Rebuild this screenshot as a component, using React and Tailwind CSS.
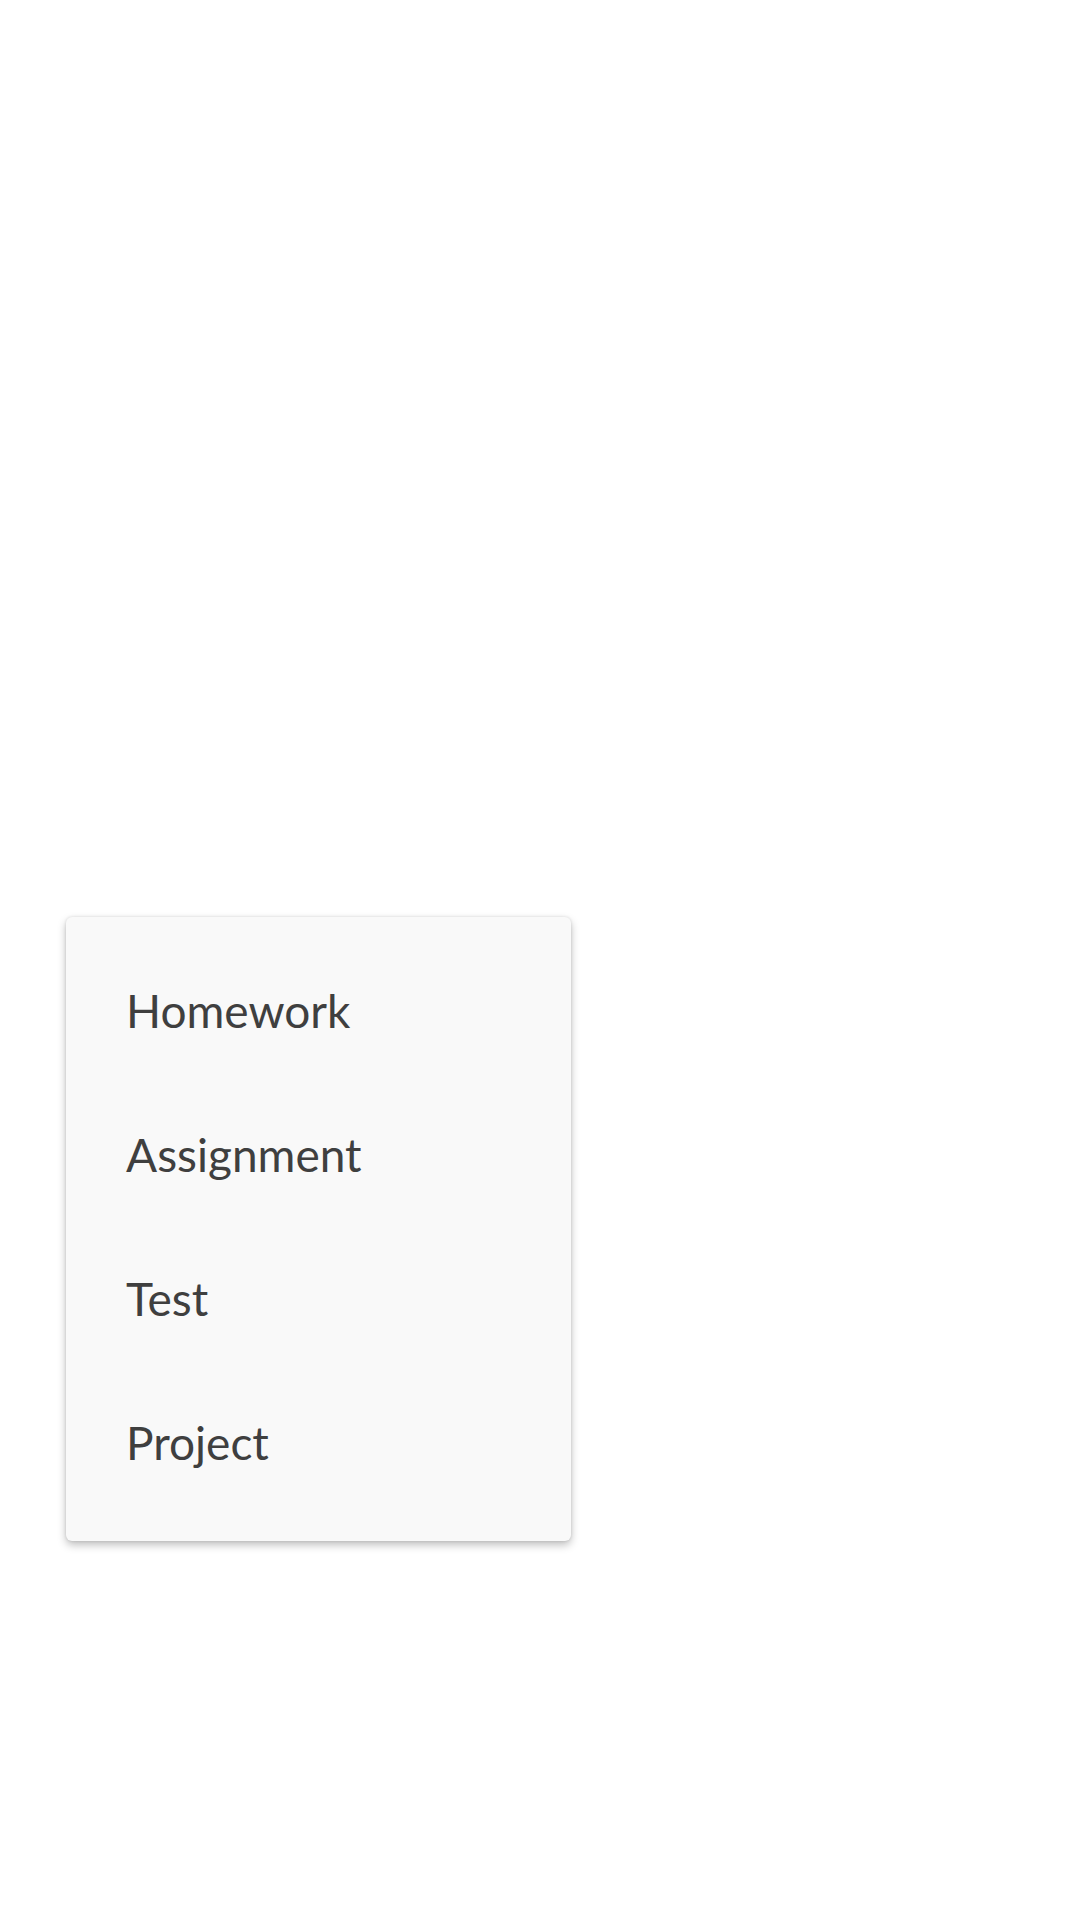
import React from 'react';

const options = ['Homework', 'Assignment', 'Test', 'Project'];

function App() {
    // popup menu for picking the task type
    return (
    <div className="w-[1080px] h-[1920px] bg-white pt-[917px] pl-[66px]">
        <div className="w-[505px] py-[24px] bg-[#f9f9f9] rounded-[6px] shadow-[0_4px_8px_rgba(0,0,0,0.25),0_0_3px_rgba(0,0,0,0.12)]">
            {options.map((option) => (
                <div
                key={option}
                className="h-[144px] pl-[60px] pb-[5px] flex items-center text-[46px] leading-[46px] text-[#3f3f3f] font-['Lato',sans-serif]"
                >
                {option}
                </div>
            ))}
        </div>
    </div>
    );
}

export default App;
